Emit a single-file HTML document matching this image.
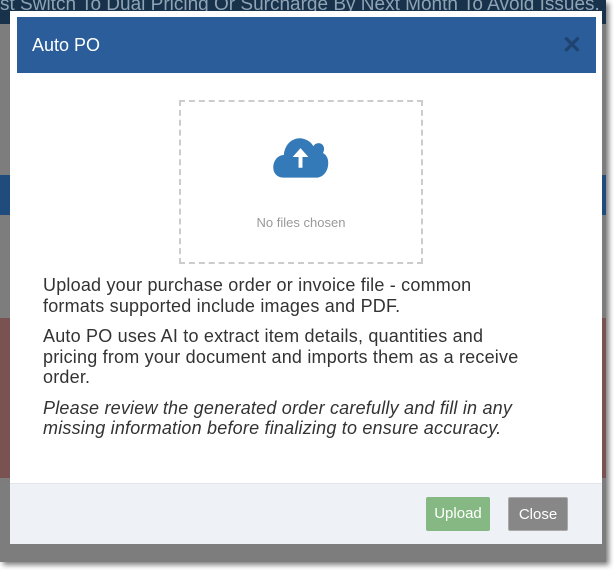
<!DOCTYPE html>
<html><head><style>
*{margin:0;padding:0;box-sizing:border-box}
body{width:614px;height:570px;background:#fff;position:relative;overflow:hidden;font-family:"Liberation Sans",sans-serif}
.bg{position:absolute;left:0;top:0;width:606px;height:562px;background:#7d7d7d;box-shadow:3px 3px 5px rgba(0,0,0,.5);overflow:hidden}
.top{position:absolute;left:0;top:0;width:606px;height:24px;background:#17324a;color:#8fa3b5;font-size:19px;white-space:nowrap;line-height:10px;overflow:hidden}
.row{position:absolute;left:0;width:606px;background:#7a5252}
.modal{position:absolute;left:10px;top:11px;width:592px;height:533px;background:#fff}
.hd{position:absolute;left:7px;top:6px;width:579px;height:56px;background:#2a5d99;color:#fff;font-size:18px;padding:18px 0 0 15px}
.x{position:absolute;right:14px;top:14px;color:#1e436f;font-size:24px;font-weight:bold}
.dz{position:absolute;left:169px;top:89px;width:244px;height:164px;border:2px dashed #ccc;text-align:center}
.dz p{position:absolute;top:113px;width:100%;color:#999;font-size:13px}
.txt{position:absolute;left:33px;top:264px;width:560px;color:#333;font-size:18px;line-height:20.5px;letter-spacing:0.2px;white-space:nowrap}
.txt p{margin-bottom:10px}
.ft{position:absolute;left:0;top:472px;width:592px;height:61px;background:#eef1f5;border-top:1px solid #e2e5ea}
.b{position:absolute;top:13px;height:34px;color:#fff;font-size:15px;line-height:34px;text-align:center;border-radius:2px}
</style></head><body>
<div class="bg">
<div class="top">st Switch To Dual Pricing Or Surcharge By Next Month To Avoid Issues. Please Op</div>
<div class="row" style="top:318px;height:160px"></div>
<div class="row" style="top:175px;height:40px;background:#1f4b7d"></div>
</div>
<div class="modal">
<div class="hd">Auto PO<span class="x">✕</span></div>
<div class="dz">
<svg style="position:absolute;left:91px;top:33px" width="57" height="44" viewBox="0 0 58 44"><path d="M12 43 C2 43 0 34 2 28 C4 22 9 20 12 20 C13 8 22 2 30 3 C36 4 40 7 42 11 C45 6 53 7 53 14 C53 16 52 17 52 18 C56 20 58 25 57 31 C56 38 51 43 45 43 Z" fill="#357ab8"/><path d="M27 33 V22 H21 L29 13 L37 22 H31 V33 Z" fill="#fff"/></svg>
<p>No files chosen</p></div>
<div class="txt">
<p>Upload your purchase order or invoice file - common<br>formats supported include images and PDF.</p>
<p>Auto PO uses AI to extract item details, quantities and<br>pricing from your document and imports them as a receive<br>order.</p>
<p style="font-style:italic">Please review the generated order carefully and fill in any<br>missing information before finalizing to ensure accuracy.</p>
</div>
<div class="ft">
<div class="b" style="left:416px;width:64px;background:#85b882">Upload</div>
<div class="b" style="left:498px;width:60px;background:#878787;border:1px solid #aaa">Close</div>
</div>
</div>
</body></html>
